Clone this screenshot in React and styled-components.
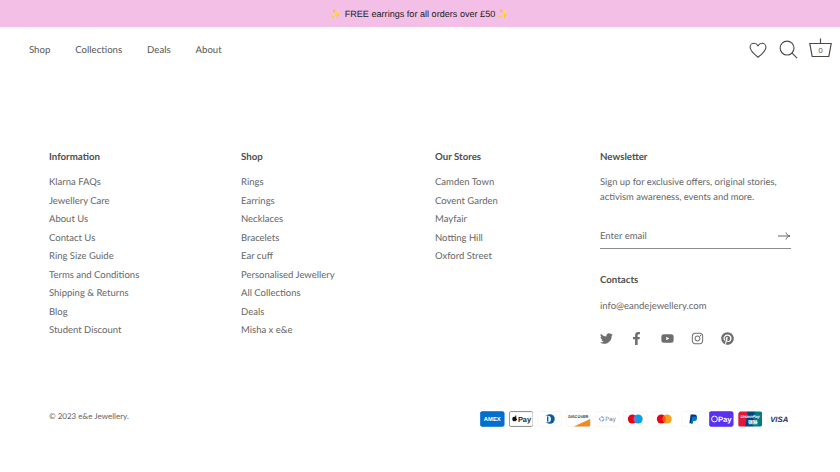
import React from 'react'
import styled, { createGlobalStyle } from 'styled-components'
import { FaTwitter, FaFacebookF, FaYoutube, FaInstagram, FaPinterest } from 'react-icons/fa'

const GlobalStyle = createGlobalStyle`
  html, body {
    margin: 0;
    padding: 0;
    background: #fff;
  }
  body {
    font-family: Lato, "Noto Sans", sans-serif;
    color: #5c5c5c;
    text-rendering: geometricPrecision;
  }
`

const Page = styled.div`
  width: 840px;
  height: 472px;
  overflow: hidden;
`

const Banner = styled.div`
  height: 26px;
  padding-top: 1px;
  background: #f4bfe6;
  display: flex;
  align-items: center;
  justify-content: center;
  font-family: "Liberation Sans", Arial, sans-serif;
  font-size: 9.1px;
  color: #1c1c1c;
`

const Header = styled.header`
  height: 45px;
  padding: 0 8px 0 29px;
  display: flex;
  align-items: center;
  justify-content: space-between;
`

const Nav = styled.nav`
  display: flex;
  gap: 25px;
  padding-top: 2px;
  a {
    font-size: 9.6px;
    color: #555;
    text-decoration: none;
  }
`

const HeaderIcons = styled.div`
  display: flex;
  align-items: center;
  gap: 11.5px;
  svg {
    display: block;
    fill: none;
    stroke: #4a4a4a;
    stroke-width: 1.2;
  }
`

const Footer = styled.footer`
  padding: 76px 49px 0;
`

const Columns = styled.div`
  display: grid;
  grid-template-columns: 192px 194px 165px 191px;
  height: 263px;
`

const Heading = styled.h4`
  margin: 0 0 8px;
  font-size: 9.7px;
  line-height: 18px;
  font-weight: 700;
  color: #505050;
`

const LinkList = styled.ul`
  list-style: none;
  margin: 0;
  padding: 0;
  li {
    font-size: 9.5px;
    line-height: 18.5px;
    color: #666;
  }
`

const Blurb = styled.p`
  margin: 0;
  padding-top: 1px;
  font-size: 9.4px;
  line-height: 15px;
  color: #666;
`

const EmailRow = styled.div`
  margin-top: 15px;
  height: 24px;
  padding-top: 4px;
  border-bottom: 1px solid #8c8c8c;
  display: flex;
  align-items: center;
  justify-content: space-between;
  font-size: 9.5px;
  color: #666;
  svg {
    display: block;
    fill: none;
    stroke: #666;
    stroke-width: 1;
  }
`

const ContactsHeading = styled(Heading)`
  margin: 22px 0 9px;
`

const Email = styled.div`
  font-size: 9.5px;
  line-height: 18px;
  color: #666;
`

const Socials = styled.div`
  margin-top: 16px;
  display: flex;
  gap: 17.25px;
  color: #6e6e6e;
  svg {
    display: block;
    width: 13px;
    height: 13px;
  }
`

const Bottom = styled.div`
  display: flex;
  align-items: center;
  justify-content: space-between;
`

const Copyright = styled.div`
  font-size: 8px;
  color: #666;
  margin-top: -6px;
`

const Cards = styled.div`
  display: flex;
  gap: 4.15px;
`

const Card = styled.svg`
  display: block;
  width: 24.5px;
  height: 16px;
  border-radius: 2px;
  text {
    font-family: "Liberation Sans", Arial, sans-serif;
  }
`

const shell = (children, fill = '#fff', stroke = '#f2f2f2') => (
  <Card viewBox="0 0 38 24">
    <rect x="0.5" y="0.5" width="37" height="23" rx="2.5" fill={fill} stroke={stroke} />
    {children}
  </Card>
)

const paymentCards = [
  shell(<text x="19" y="15.500" fontSize="9" fontWeight="700" fill="#fff" textAnchor="middle">AMEX</text>, '#016fd0', '#016fd0'),
  shell(
    <>
      <path d="M7 9c1-1 2-.5 2.500-.5 1 0 1.500-.5 2.500 0-1.500 1-1 3 .5 3.500-.5 2-1.500 3.500-2.500 3.500-1 0-1-.5-1.500-.5s-1 .5-1.500.5c-1.500 0-3-5-.5-6.500zM9.500 8c0-1 .7-2 1.800-2 0 1-.8 2-1.800 2z" fill="#111" />
      <text x="24" y="16.500" fontSize="11.500" fontWeight="700" fill="#222" textAnchor="middle">Pay</text>
    </>,
    '#fff', '#444'
  ),
  shell(
    <>
      <circle cx="20" cy="12" r="7.500" fill="#0a5aa5" />
      <circle cx="16.500" cy="12" r="5.200" fill="#fff" />
      <rect x="15.500" y="8" width="2.200" height="8" fill="#0a5aa5" />
    </>
  ),
  shell(
    <>
      <path d="M12 23.500L37.500 12v9.500a2 2 0 0 1-2 2z" fill="#f08a24" />
      <text x="19" y="10.500" fontSize="6" fontWeight="700" fill="#333" textAnchor="middle">DISCOVER</text>
    </>
  ),
  shell(
    <>
      <circle cx="10.500" cy="12" r="3.300" fill="none" stroke="#4285f4" strokeWidth="1.500" strokeDasharray="5 1.300" />
      <text x="24" y="15.500" fontSize="9.500" fill="#777" textAnchor="middle">Pay</text>
    </>
  ),
  shell(
    <>
      <circle cx="14.500" cy="12" r="7" fill="#eb001b" />
      <circle cx="23.500" cy="12" r="7" fill="#00a2e5" />
      <path d="M19 6.600a7 7 0 0 1 0 10.800a7 7 0 0 1 0-10.800z" fill="#7375cf" />
    </>
  ),
  shell(
    <>
      <circle cx="14.500" cy="12" r="7" fill="#eb001b" />
      <circle cx="23.500" cy="12" r="7" fill="#f79e1b" />
      <path d="M19 6.600a7 7 0 0 1 0 10.800a7 7 0 0 1 0-10.800z" fill="#ff5f00" />
    </>
  ),
  shell(
    <>
      <path d="M15 5h5.500c3 0 4.500 1.500 4 4-.5 2.800-2.500 4-5 4h-2l-1 5.500h-3.500z" fill="#003087" />
      <path d="M17.500 8h4.500c2.500 0 3.500 1.500 3 3.500-.5 2.500-2.500 3.500-4.500 3.500h-1.500l-.8 4.500h-3z" fill="#0079c1" />
    </>
  ),
  shell(
    <>
      <rect x="4" y="7.500" width="9" height="9" rx="4.500" fill="none" stroke="#fff" strokeWidth="1.500" />
      <text x="24.500" y="16.500" fontSize="12" fontWeight="700" fill="#fff" textAnchor="middle">Pay</text>
    </>,
    '#5a31f4', '#5a31f4'
  ),
  shell(
    <>
      <path d="M3 .5h13L12 23.500H2a1.500 1.500 0 0 1-1.500-1.500V3z" fill="#e21836" />
      <path d="M15 .5h12L23 23.500H11z" fill="#00447c" />
      <path d="M26 .5h9.500a2 2 0 0 1 2 2v19a2 2 0 0 1-2 2H22z" fill="#007b84" />
      <text x="19" y="11" fontSize="6.500" fontWeight="700" fontStyle="italic" fill="#fff" textAnchor="middle">UnionPay</text>
      <text x="23" y="19.500" fontSize="7.500" fontWeight="700" fill="#fff" textAnchor="middle" style={{ fontFamily: '"Noto Sans CJK SC", sans-serif' }}>银联</text>
    </>,
    '#fff', 'none'
  ),
  shell(<text x="19" y="16.500" fontSize="12" fontWeight="700" fontStyle="italic" fill="#22316f" textAnchor="middle">VISA</text>),
]

const columns = [
  {
    title: 'Information',
    links: ['Klarna FAQs', 'Jewellery Care', 'About Us', 'Contact Us', 'Ring Size Guide', 'Terms and Conditions', 'Shipping & Returns', 'Blog', 'Student Discount'],
  },
  {
    title: 'Shop',
    links: ['Rings', 'Earrings', 'Necklaces', 'Bracelets', 'Ear cuff', 'Personalised Jewellery', 'All Collections', 'Deals', 'Misha x e&e'],
  },
  {
    title: 'Our Stores',
    links: ['Camden Town', 'Covent Garden', 'Mayfair', 'Notting Hill', 'Oxford Street'],
  },
]

const App = () => (
  <Page>
    <GlobalStyle />
    <Banner>✨ FREE earrings for all orders over £50 ✨</Banner>
    <Header>
      <Nav>
        <a href="#">Shop</a>
        <a href="#">Collections</a>
        <a href="#">Deals</a>
        <a href="#">About</a>
      </Nav>
      <HeaderIcons>
        <svg width="18" height="18" viewBox="0 0 20 20">
          <path d="M10 18C6 15 1.200 11.500 1.200 6.800c0-2.500 2-4.300 4.200-4.300 1.900 0 3.600 1 4.600 2.700 1-1.700 2.700-2.700 4.600-2.700 2.200 0 4.200 1.800 4.200 4.300 0 4.700-4.800 8.200-8.800 11.200z" />
        </svg>
        <svg width="19" height="19" viewBox="0 0 20 20">
          <circle cx="8.500" cy="8.500" r="7.300" />
          <path d="M13.800 13.800L19 19" />
        </svg>
        <svg width="23" height="23" viewBox="0 0 23 23">
          <path d="M11.500 .500V5.500M.8 5.500h21.400l-2.400 13H3.200z" />
          <text x="11.500" y="14.500" fontSize="7" textAnchor="middle" fill="#555" stroke="none">0</text>
        </svg>
      </HeaderIcons>
    </Header>
    <Footer>
      <Columns>
        {columns.map((col) => (
          <div key={col.title}>
            <Heading>{col.title}</Heading>
            <LinkList>
              {col.links.map((link) => (
                <li key={link}>{link}</li>
              ))}
            </LinkList>
          </div>
        ))}
        <div>
          <Heading>Newsletter</Heading>
          <Blurb>
            Sign up for exclusive offers, original stories,
            <br />
            activism awareness, events and more.
          </Blurb>
          <EmailRow>
            Enter email
            <svg width="14" height="10" viewBox="0 0 14 10">
              <path d="M1 5h12M9 1.500c.5 1.800 2 3.500 4 3.500-2 0-3.500 1.700-4 3.500" />
            </svg>
          </EmailRow>
          <ContactsHeading>Contacts</ContactsHeading>
          <Email>info@eandejewellery.com</Email>
          <Socials>
            <FaTwitter />
            <FaFacebookF />
            <FaYoutube />
            <FaInstagram />
            <FaPinterest />
          </Socials>
        </div>
      </Columns>
      <Bottom>
        <Copyright>© 2023 e&amp;e Jewellery.</Copyright>
        <Cards>
          {paymentCards.map((card, i) => (
            <React.Fragment key={i}>{card}</React.Fragment>
          ))}
        </Cards>
      </Bottom>
    </Footer>
  </Page>
)

export default App
